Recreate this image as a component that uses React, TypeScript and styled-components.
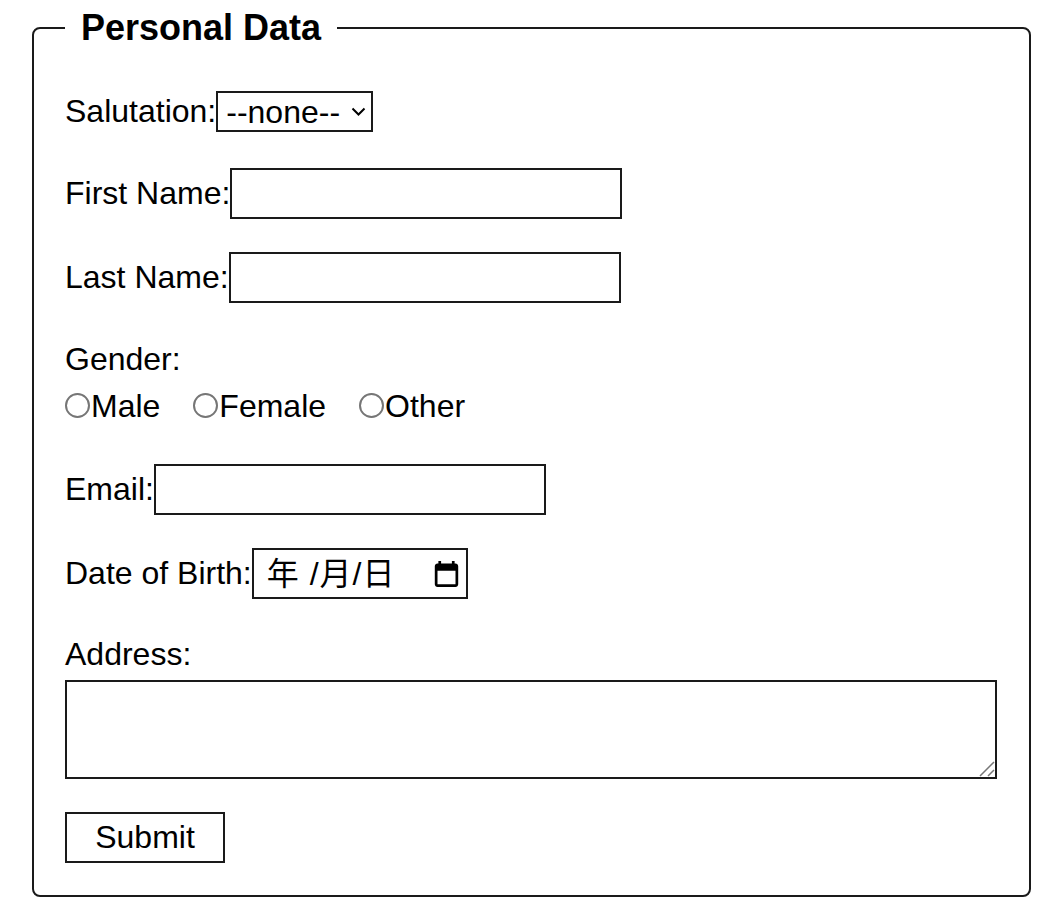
import React from "react";
import styled, { createGlobalStyle } from "styled-components";

const GlobalStyle = createGlobalStyle`
  html, body {
    margin: 0;
    padding: 0;
    background: #ffffff;
  }
  body {
    font-family: "Liberation Sans", "Noto Sans CJK SC", Arial, sans-serif;
    font-size: 32px;
    color: #000000;
  }
  * { box-sizing: border-box; }
`;

const Page = styled.div`
  padding: 7px 0 16px 32px;
`;

const Fieldset = styled.fieldset`
  margin: 0;
  width: 999px;
  border: 2px solid #1a1a1a;
  border-radius: 8px;
  padding: 0 32px 32px 31px;
  min-inline-size: 0;
`;

const Legend = styled.legend`
  font-size: 36px;
  font-weight: 700;
  padding: 0 16px;
  line-height: normal;
`;

const Column = styled.div`
  display: flex;
  flex-direction: column;
  align-items: flex-start;
`;

const Row = styled.div<{ $mt: number }>`
  display: flex;
  align-items: center;
  margin-top: ${(p) => p.$mt}px;
`;

const Label = styled.label`
  font-size: 32px;
  line-height: normal;
  white-space: nowrap;
`;

const BlockLabel = styled.label<{ $mt: number }>`
  display: block;
  font-size: 32px;
  line-height: normal;
  margin-top: ${(p) => p.$mt}px;
`;

const SelectWrap = styled.div`
  position: relative;
  display: inline-flex;
`;

const Select = styled.select`
  appearance: none;
  -webkit-appearance: none;
  width: 157px;
  height: 41px;
  border: 2px solid #1a1a1a;
  border-radius: 0;
  background: #ffffff;
  color: #000;
  font-family: "Liberation Sans", Arial, sans-serif;
  font-size: 32px;
  line-height: 36px;
  padding: 0 30px 0 8px;
  outline: none;
`;

const Chevron = styled.svg`
  position: absolute;
  right: 7px;
  top: 16px;
  pointer-events: none;
`;

const TextInput = styled.input`
  width: 392px;
  height: 51px;
  border: 2px solid #1a1a1a;
  border-radius: 0;
  background: #ffffff;
  font-family: "Liberation Sans", Arial, sans-serif;
  font-size: 32px;
  padding: 0 6px;
  outline: none;
`;

const RadioRow = styled.div<{ $mt: number }>`
  display: flex;
  align-items: center;
  gap: 33px;
  margin-top: ${(p) => p.$mt}px;
`;

const RadioOption = styled.label`
  display: inline-flex;
  align-items: center;
  line-height: normal;
  font-size: 32px;
`;

const Radio = styled.input`
  appearance: none;
  -webkit-appearance: none;
  width: 25px;
  height: 25px;
  margin: 0 1px 0 0;
  border: 2px solid #767676;
  border-radius: 50%;
  background: #ffffff;
  position: relative;
  top: -1px;
`;

const DateField = styled.div`
  width: 216px;
  height: 51px;
  border: 2px solid #1a1a1a;
  background: #ffffff;
  display: flex;
  align-items: center;
  justify-content: space-between;
  padding: 0 6px 0 13px;
`;

const DateText = styled.span`
  font-family: "Liberation Sans", "Noto Sans CJK SC", sans-serif;
  font-size: 32px;
  line-height: 1;
  white-space: pre;
  letter-spacing: 1px;
`;

const TextAreaWrap = styled.div`
  position: relative;
  width: 932px;
  margin-top: 7px;
`;

const TextArea = styled.textarea`
  display: block;
  width: 932px;
  height: 99px;
  border: 2px solid #1a1a1a;
  border-radius: 0;
  resize: none;
  font-family: "Liberation Sans", Arial, sans-serif;
  font-size: 32px;
  outline: none;
`;

const Grip = styled.svg`
  position: absolute;
  right: 2px;
  bottom: 2px;
  pointer-events: none;
`;

const SubmitButton = styled.button`
  margin-top: 33px;
  width: 160px;
  height: 51px;
  border: 2px solid #1a1a1a;
  border-radius: 0;
  background: #ffffff;
  color: #000;
  font-family: "Liberation Sans", Arial, sans-serif;
  font-size: 32px;
  padding: 0;
`;

const CalendarIcon = () => (
  <svg width="27" height="27" viewBox="0 0 15 15" aria-hidden="true">
    <path
      fill="#000"
      d="M12.5 2H12V0.5h-1.5V2h-6V0.5H3V2h-.5C1.67 2 1 2.67 1 3.5v10c0 .83.67 1.5 1.5 1.5h10c.83 0 1.5-.67 1.5-1.5v-10c0-.83-.67-1.5-1.5-1.5zm0 11.5h-10V6h10v7.5z"
    />
  </svg>
);

export default function App() {
  return (
    <>
      <GlobalStyle />
      <Page>
        <form onSubmit={(e) => e.preventDefault()}>
          <Fieldset>
            <Legend>Personal Data</Legend>
            <Column>
              <Row $mt={42}>
                <Label htmlFor="salutation">Salutation:</Label>
                <SelectWrap>
                  <Select id="salutation" defaultValue="">
                    <option value="">--none--</option>
                    <option value="mr">Mr.</option>
                    <option value="ms">Ms.</option>
                  </Select>
                  <Chevron width="15" height="9" viewBox="0 0 15 9" aria-hidden="true">
                    <path d="M1.5 1.5l6 6 6-6" fill="none" stroke="#000" strokeWidth="2" />
                  </Chevron>
                </SelectWrap>
              </Row>

              <Row $mt={36}>
                <Label htmlFor="first">First Name:</Label>
                <TextInput id="first" type="text" />
              </Row>

              <Row $mt={33}>
                <Label htmlFor="last">Last Name:</Label>
                <TextInput id="last" type="text" />
              </Row>

              <BlockLabel $mt={38}>Gender:</BlockLabel>
              <RadioRow $mt={10}>
                <RadioOption>
                  <Radio type="radio" name="gender" value="male" />
                  Male
                </RadioOption>
                <RadioOption>
                  <Radio type="radio" name="gender" value="female" />
                  Female
                </RadioOption>
                <RadioOption>
                  <Radio type="radio" name="gender" value="other" />
                  Other
                </RadioOption>
              </RadioRow>

              <Row $mt={39}>
                <Label htmlFor="email">Email:</Label>
                <TextInput id="email" type="email" />
              </Row>

              <Row $mt={33}>
                <Label>Date of Birth:</Label>
                <DateField>
                  <DateText>年 /月/日</DateText>
                  <CalendarIcon />
                </DateField>
              </Row>

              <BlockLabel $mt={37} htmlFor="address">Address:</BlockLabel>
              <TextAreaWrap>
                <TextArea id="address" />
                <Grip width="16" height="16" viewBox="0 0 16 16" aria-hidden="true">
                  <path d="M1 15L15 1M9 15l6-6" stroke="#777" strokeWidth="1.5" fill="none" />
                </Grip>
              </TextAreaWrap>

              <SubmitButton type="submit">Submit</SubmitButton>
            </Column>
          </Fieldset>
        </form>
      </Page>
    </>
  );
}
